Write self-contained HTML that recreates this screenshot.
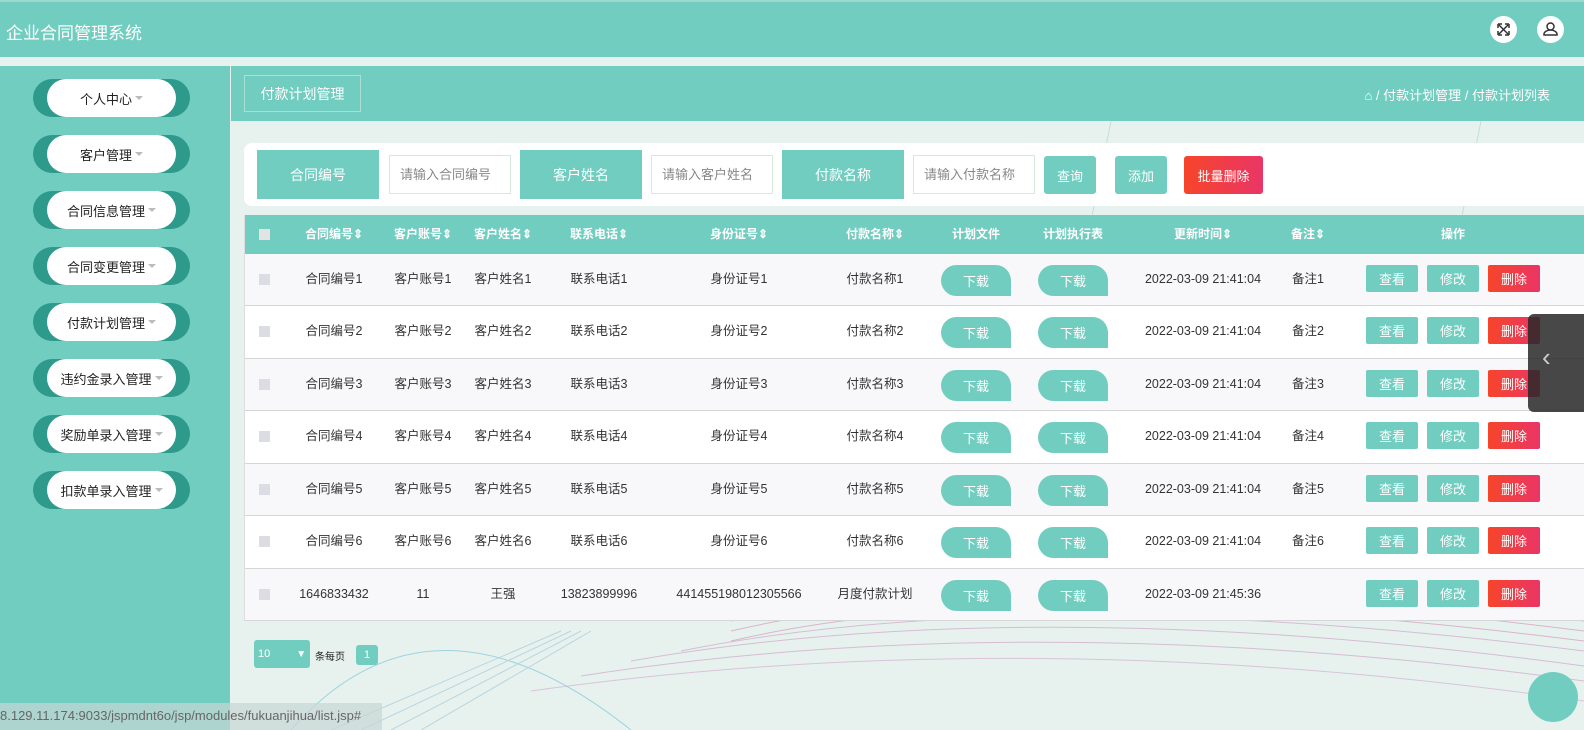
<!DOCTYPE html>
<html><head><meta charset="utf-8"><style>
*{margin:0;padding:0;box-sizing:border-box}
body{width:1584px;height:730px;overflow:hidden;background:#e7f2ee;font-family:"Liberation Sans","Noto Sans CJK SC",sans-serif;position:relative;color:#333}
.hdr{position:absolute;left:0;top:0;width:1584px;height:57px;background:#71cdc0;border-top:2px solid #9fd8cf}
.hdr .t{position:absolute;left:6px;top:17px;color:#fff;font-size:17px}
.ic{position:absolute;top:14px;width:27px;height:27px;border-radius:50%;background:#fff}
.side{position:absolute;left:0;top:66px;width:230px;height:664px;background:#71cdc0}
.pill{position:absolute;left:33px;width:157px;height:38px;border-radius:19px;background:#2e9a8b}
.pill span{position:absolute;left:14px;right:14px;top:0;height:38px;background:#fff;border-radius:19px/19px;display:flex;align-items:center;justify-content:center;font-size:13px;color:#222}
.pill span:after{content:"";border:4px solid transparent;border-top:4px solid #bbb;margin-left:3px;margin-top:4px}
.bc{position:absolute;left:231px;top:66px;width:1353px;height:55px;background:#71cdc0}
.bc .b{position:absolute;left:13px;top:9px;width:117px;height:37px;border:1px solid #a8e0d7;color:#fff;font-size:14px;display:flex;align-items:center;justify-content:center}
.bc .r{position:absolute;right:34px;top:19px;color:#fff;font-size:13px}
.sp{position:absolute;left:244px;top:143px;width:1360px;height:63px;background:#fff;border-radius:8px}
.lb{position:absolute;top:150px;width:122px;height:49px;background:#71cdc0;color:#fff;font-size:14px;display:flex;align-items:center;justify-content:center}
.in{position:absolute;top:155px;width:122px;height:39px;border:1px solid #d4eadc;background:#fff;color:#888;font-size:13px;padding-left:10px;line-height:37px}
.btn{position:absolute;display:flex;align-items:center;justify-content:center;color:#fff;font-size:13px;border-radius:3px;background:#71cdc0}
.red{background:linear-gradient(90deg,#f6452a,#ea3566)}
.tb{position:absolute;left:244px;top:215px;width:1360px;height:406px;background:#fff;border-left:1px solid #ddd}
.th{position:absolute;left:0;top:0;width:100%;height:39px;background:#71cdc0}
.c{position:absolute;transform:translateX(-50%);white-space:nowrap;font-size:12.5px;line-height:16px;height:16px;display:flex;align-items:center}
.th .c{top:11px;color:#fff;font-weight:bold;font-size:12px}
.row{position:absolute;left:0;width:100%;border-bottom:1px solid #d6d6d6}
.row .c{top:17px;color:#333}
.cb{position:absolute;left:14px;width:11px;height:11px;background:#dcdde2}
.dl{position:absolute;width:70px;height:31px;top:11px;background:#71cdc0;border-radius:16px 16px 0 16px;color:#fff;font-size:13px;display:flex;align-items:center;justify-content:center}
.ob{position:absolute;top:11px;width:52px;height:27px;border-radius:2px;color:#fff;font-size:13px;display:flex;align-items:center;justify-content:center;background:#71cdc0}
.ob.red{background:linear-gradient(90deg,#f6452a,#ea3566)}
</style></head><body>
<svg style="position:absolute;left:231px;top:121px" width="1353" height="609">
<g fill="none" stroke-width="1">
<path d="M500 500 Q800 430 1353 500" stroke="#d9b4cc"/><path d="M500 510 Q800 440 1353 510" stroke="#d9b4cc"/><path d="M500 520 Q800 450 1353 520" stroke="#d9b4cc"/><path d="M450 530 Q800 460 1353 530" stroke="#d6bcd4"/><path d="M400 540 Q800 470 1353 545" stroke="#d6bcd4"/><path d="M350 555 Q800 485 1353 560" stroke="#d6bcd4"/><path d="M300 570 Q800 500 1353 580" stroke="#d9c3d9"/>
<path d="M60 609 Q200 450 400 609" stroke="#9ed3e0"/><path d="M880 0 L780 500" stroke="#c0dede"/><path d="M1250 0 L1150 500" stroke="#c0dede"/>
<path d="M100 609 L330 510" stroke="#b8d5e0"/><path d="M130 609 L340 510" stroke="#b8d5e0"/><path d="M160 609 L350 510" stroke="#b8d5e0"/><path d="M190 609 L360 510" stroke="#b8d5e0"/>
</g></svg>
<div class="hdr"><div class="t">企业合同管理系统</div>
<div class="ic" style="left:1490px"><svg width="27" height="27"><path d="M9 9l9 9M18 9l-9 9M8 8h4M8 8v4M19 8h-4M19 8v4M8 19h4M8 19v-4M19 19h-4M19 19v-4" stroke="#333" stroke-width="1.5" fill="none"/></svg></div>
<div class="ic" style="left:1537px"><svg width="27" height="27"><circle cx="13.5" cy="10.5" r="3.5" stroke="#333" stroke-width="1.5" fill="none"/><path d="M7 19h13v-1c0-2-3-4-6.5-4S7 16 7 18z" stroke="#333" stroke-width="1.5" fill="none"/></svg></div>
</div>
<div class="side">
<div class="pill" style="top:13px"><span>个人中心</span></div>
<div class="pill" style="top:69px"><span>客户管理</span></div>
<div class="pill" style="top:125px"><span>合同信息管理</span></div>
<div class="pill" style="top:181px"><span>合同变更管理</span></div>
<div class="pill" style="top:237px"><span>付款计划管理</span></div>
<div class="pill" style="top:293px"><span>违约金录入管理</span></div>
<div class="pill" style="top:349px"><span>奖励单录入管理</span></div>
<div class="pill" style="top:405px"><span>扣款单录入管理</span></div>
</div>
<div class="bc"><div class="b">付款计划管理</div><div class="r">⌂ / 付款计划管理 / 付款计划列表</div></div>
<div class="sp"></div>
<div class="lb" style="left:257px">合同编号</div><div class="in" style="left:389px">请输入合同编号</div>
<div class="lb" style="left:520px">客户姓名</div><div class="in" style="left:651px">请输入客户姓名</div>
<div class="lb" style="left:782px">付款名称</div><div class="in" style="left:913px">请输入付款名称</div>
<div class="btn" style="left:1044px;top:156px;width:52px;height:38px">查询</div>
<div class="btn" style="left:1115px;top:156px;width:52px;height:38px">添加</div>
<div class="btn red" style="left:1184px;top:156px;width:79px;height:38px">批量删除</div>
<div class="tb">
<div class="th"><div class="cb" style="top:14px;background:#e3e3e3"></div>
<div class="c" style="left:89px">合同编号⇕</div><div class="c" style="left:178px">客户账号⇕</div><div class="c" style="left:258px">客户姓名⇕</div><div class="c" style="left:354px">联系电话⇕</div><div class="c" style="left:494px">身份证号⇕</div><div class="c" style="left:630px">付款名称⇕</div><div class="c" style="left:731px">计划文件</div><div class="c" style="left:828px">计划执行表</div><div class="c" style="left:958px">更新时间⇕</div><div class="c" style="left:1063px">备注⇕</div><div class="c" style="left:1208px">操作</div></div>
</div>
<script>
var h='';var ys=[39,91,144,196,249,301,354,406];
for(var i=0;i<7;i++){var l=i<6;var n=i+1;
var v=l?['合同编号'+n,'客户账号'+n,'客户姓名'+n,'联系电话'+n,'身份证号'+n,'付款名称'+n,'2022-03-09 21:41:04','备注'+n]:['1646833432','11','王强','13823899996','441455198012305566','月度付款计划','2022-03-09 21:45:36',''];
h+='<div class="row" style="top:'+ys[i]+'px;height:'+(ys[i+1]-ys[i])+'px;background:'+(i%2?'#fff':'#f8f8fa')+'"><div class="cb" style="top:20px"></div>'+
'<div class="c" style="left:89px">'+v[0]+'</div><div class="c" style="left:178px">'+v[1]+'</div><div class="c" style="left:258px">'+v[2]+'</div><div class="c" style="left:354px">'+v[3]+'</div><div class="c" style="left:494px">'+v[4]+'</div><div class="c" style="left:630px">'+v[5]+'</div>'+
'<div class="dl" style="left:696px">下载</div><div class="dl" style="left:793px">下载</div><div class="c" style="left:958px">'+v[6]+'</div><div class="c" style="left:1063px">'+v[7]+'</div>'+
'<div class="ob" style="left:1121px">查看</div><div class="ob" style="left:1182px">修改</div><div class="ob red" style="left:1243px">删除</div></div>';}
document.querySelector('.tb').innerHTML+=h;
</script>
<div class="btn" style="left:254px;top:640px;width:56px;height:28px;justify-content:flex-start;padding-left:4px;font-size:11px">10<span style="margin-left:26px;font-size:10px">▼</span></div>
<div style="position:absolute;left:315px;top:648px;font-size:10px;color:#222">条每页</div>
<div class="btn" style="left:356px;top:645px;width:22px;height:20px;font-size:11px">1</div>
<div style="position:absolute;left:1528px;top:314px;width:56px;height:98px;background:rgba(40,40,40,.85);border-radius:6px 0 0 6px;color:#ccc;font-size:26px;padding:28px 0 0 14px">‹</div>
<div style="position:absolute;left:0;top:703px;width:382px;height:27px;background:rgba(200,215,212,.7);color:#666;font-size:13px;padding:5px 0 0 0">8.129.11.174:9033/jspmdnt6o/jsp/modules/fukuanjihua/list.jsp#</div>
<div style="position:absolute;left:1528px;top:672px;width:50px;height:50px;border-radius:50%;background:#71cdc0"></div>
</body></html>
